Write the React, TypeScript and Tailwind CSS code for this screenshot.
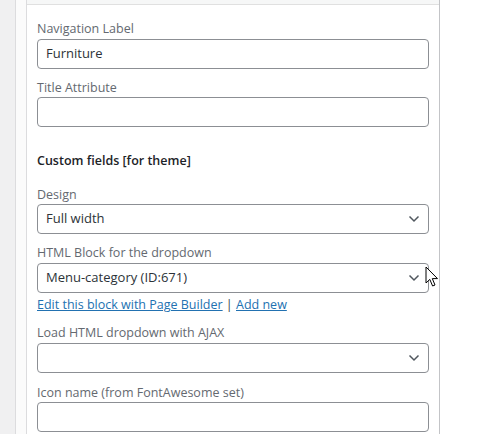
import React from 'react';

const font = { fontFamily: '"Open Sans", "Noto Sans", sans-serif' };

function Chevron() {
  return (
    <svg width="12" height="8" viewBox="0 0 12 8" className="shrink-0">
      <path d="M1.5 1.5 L6 6 L10.5 1.5" fill="none" stroke="#50575e" strokeWidth="1.5" />
    </svg>
  );
}

function Label({ children }: { children: React.ReactNode }) {
  return <div className="text-[12.5px] leading-[18px] text-[#646970]">{children}</div>;
}

function TextInput({ value }: { value?: string }) {
  return (
    <div className="h-[30px] rounded-[4px] border border-[#8c8f94] bg-white px-[8px] flex items-center text-[13px] text-[#2c3338]">
      {value}
    </div>
  );
}

function Select({ value }: { value?: string }) {
  return (
    <div className="h-[30px] rounded-[4px] border border-[#8c8f94] bg-white pl-[8px] pr-[8px] flex items-center justify-between text-[13px] text-[#2c3338]">
      <span>{value}</span>
      <Chevron />
    </div>
  );
}

function Cursor() {
  return (
    <svg width="14" height="22" viewBox="0 0 14 22" className="absolute left-[425px] top-[266px]">
      <path
        d="M1 1 L1 17 L4.8 13.4 L7.6 20 L10 19 L7.3 12.6 L12.5 12.6 Z"
        fill="#fff"
        stroke="#000"
        strokeWidth="1"
        strokeLinejoin="round"
      />
    </svg>
  );
}

export default function App() {
  return (
    <div className="relative flex w-[478px] h-[434px] overflow-hidden bg-white" style={font}>
      <div className="w-[16px] shrink-0 bg-[#f0f0f1] border-r border-[#dcdcde]" />
      <div className="w-[11px] shrink-0 bg-[#fbfbfb] border-r border-[#dcdcde]" />
      <div className="w-[413px] shrink-0 border-r border-[#c3c4c7] bg-white flex flex-col">
        <div className="h-[5px] bg-[#f6f7f7] border-b border-[#e0e0e0]" />
        <div className="px-[10px] pt-[15px] flex flex-col">
          <Label>Navigation Label</Label>
          <div className="mt-px">
            <TextInput value="Furniture" />
          </div>

          <div className="mt-[10px]">
            <Label>Title Attribute</Label>
          </div>
          <TextInput />

          <div className="mt-[25px] text-[12.5px] leading-[18px] font-semibold text-[#1d2327]">
            Custom fields [for theme]
          </div>

          <div className="mt-[16px]">
            <Label>Design</Label>
          </div>
          <Select value="Full width" />

          <div className="mt-[10px]">
            <Label>HTML Block for the dropdown</Label>
          </div>
          <div className="mt-px">
            <Select value="Menu-category (ID:671)" />
          </div>
          <div className="mt-[3px] text-[12.5px] leading-[18px] text-[#2271b1]">
            <a className="underline">Edit this block with Page Builder</a>
            <span className="text-[#3c434a]"> | </span>
            <a className="underline">Add new</a>
          </div>

          <div className="mt-[10px]">
            <Label>Load HTML dropdown with AJAX</Label>
          </div>
          <div className="mt-px">
            <Select />
          </div>

          <div className="mt-[11px]">
            <Label>Icon name (from FontAwesome set)</Label>
          </div>
          <TextInput />
        </div>
      </div>
      <div className="flex-1 bg-white" />
      <Cursor />
    </div>
  );
}
